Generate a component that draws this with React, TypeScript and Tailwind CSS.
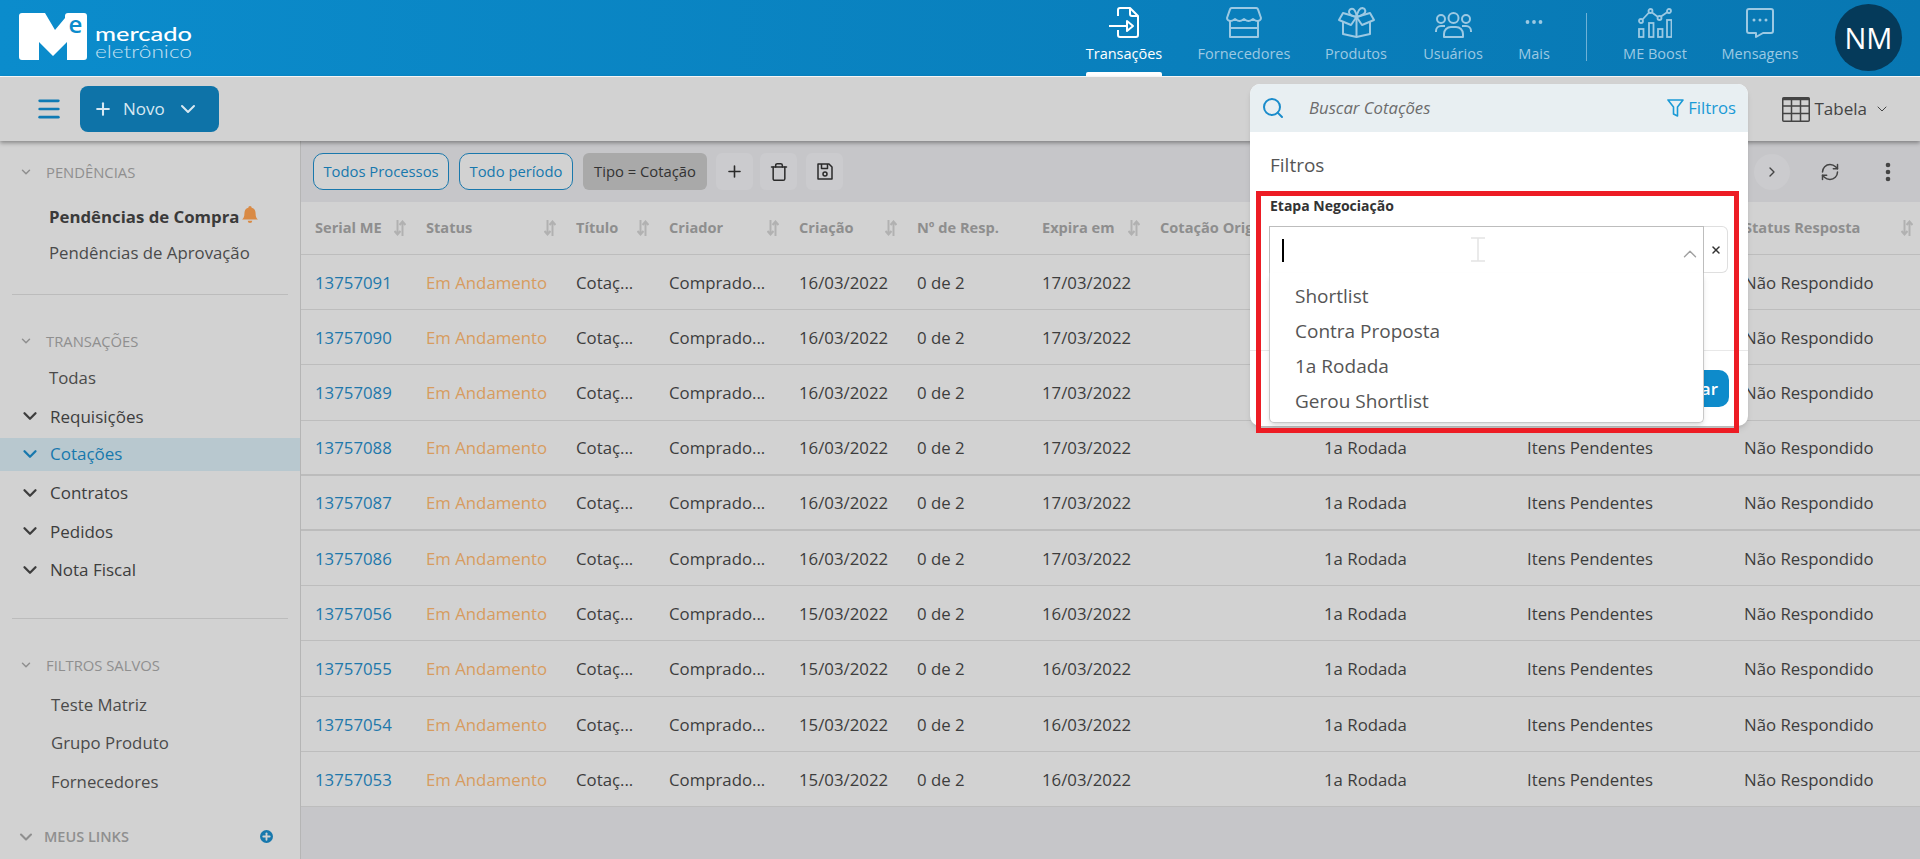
import React from "react";
import { ChevronDown, ChevronUp, ChevronRight, Menu, Plus, RefreshCw, Search, Trash, X } from "lucide-react";

const navItems = [
    { label: "Transações", width: "w-[120px]", active: true, icon: <FileIcon /> },
    { label: "Fornecedores", width: "w-[120px]", icon: <StoreIcon /> },
    { label: "Produtos", width: "w-[104px]", icon: <BoxIcon /> },
    { label: "Usuários", width: "w-[90px]", icon: <UsersIcon /> },
    { label: "Mais", width: "w-[72px]", icon: <DotsIcon /> },
];

const rows = [
    { serial: "13757091", created: "16/03/2022", expires: "17/03/2022", covered: true },
    { serial: "13757090", created: "16/03/2022", expires: "17/03/2022", covered: true },
    { serial: "13757089", created: "16/03/2022", expires: "17/03/2022", covered: true },
    { serial: "13757088", created: "16/03/2022", expires: "17/03/2022", thick: true },
    { serial: "13757087", created: "16/03/2022", expires: "17/03/2022", thick: true },
    { serial: "13757086", created: "16/03/2022", expires: "17/03/2022" },
    { serial: "13757056", created: "15/03/2022", expires: "16/03/2022" },
    { serial: "13757055", created: "15/03/2022", expires: "16/03/2022" },
    { serial: "13757054", created: "15/03/2022", expires: "16/03/2022" },
    { serial: "13757053", created: "15/03/2022", expires: "16/03/2022" },
];

const gridCols = "grid grid-cols-[111px_150px_93px_130px_118px_125px_118px_164px_203px_217px_1fr] pl-[14px]";

function FileIcon() {
    return (
        <svg width="36" height="31" viewBox="0 0 36 31" fill="none" stroke="currentColor" strokeWidth="2" strokeLinejoin="round">
            <path d="M12 9V3a2 2 0 0 1 2-2h10l8 8v19a2 2 0 0 1-2 2H14a2 2 0 0 1-2-2v-5" />
            <path d="M24 1v6a2 2 0 0 0 2 2h6" />
            <path d="M3 19h18" />
            <path d="M21 14l6 5-6 5z" />
        </svg>
    );
}

function StoreIcon() {
    return (
        <svg width="36" height="31" viewBox="0 0 36 31" fill="none" stroke="currentColor" strokeWidth="2" strokeLinejoin="round">
            <path d="M6 1h24a2 2 0 0 1 2 1.4L35 11c0 2-2 3-3.5 3s-3-1-4.500-2c-1.500 1-3 2-4.500 2s-3-1-4.500-2c-1.500 1-3 2-4.500 2s-3-1-4.500-2C7.500 13 6 14 4.500 14S1 13 1 11L4 2.400A2 2 0 0 1 6 1z" />
            <path d="M4 14v16h28V14" />
            <path d="M4 21h28" />
        </svg>
    );
}

function BoxIcon() {
    return (
        <svg width="37" height="31" viewBox="0 0 37 31" fill="none" stroke="currentColor" strokeWidth="2" strokeLinejoin="round">
            <path d="M5 15v12l13.500 3L32 27V15" />
            <path d="M18.500 10v20" />
            <path d="M18.500 10L5 6l-4 7 12 5z" />
            <path d="M18.500 10L32 6l4 7-12 5z" />
            <path d="M18.500 10C11 9 9 4 13 2c3-1 5.500 3 5.500 8z" />
            <path d="M18.500 10c1-5 3-9 6-9 3 .500 4 4 1 6-2 1.500-4 2.500-7 3z" />
        </svg>
    );
}

function UsersIcon() {
    return (
        <svg width="37" height="26" viewBox="0 0 37 26" fill="none" stroke="currentColor" strokeWidth="2" strokeLinejoin="round">
            <circle cx="18.500" cy="6" r="5" />
            <circle cx="6" cy="7" r="4" />
            <circle cx="31" cy="7" r="4" />
            <path d="M9 25v-3a7 7 0 0 1 7-7h5a7 7 0 0 1 7 7v3z" />
            <path d="M1 20v-1a5 5 0 0 1 5-5h4" />
            <path d="M36 20v-1a5 5 0 0 0-5-5h-4" />
        </svg>
    );
}

function DotsIcon() {
    return (
        <svg width="18" height="18" viewBox="0 0 18 18" fill="currentColor" className="mb-[7px]">
            <circle cx="2.500" cy="9" r="1.900" />
            <circle cx="9" cy="9" r="1.900" />
            <circle cx="15.500" cy="9" r="1.900" />
        </svg>
    );
}

function BoostIcon() {
    return (
        <svg width="34" height="30" viewBox="0 0 34 30" fill="none" stroke="currentColor" strokeWidth="1.800">
            <rect x="1" y="21" width="4.500" height="8" />
            <rect x="11" y="15" width="4.500" height="14" />
            <rect x="20" y="21" width="4.500" height="8" />
            <rect x="29" y="12" width="4.500" height="17" />
            <circle cx="3" cy="13" r="2" />
            <circle cx="12.500" cy="3" r="2" />
            <circle cx="21.500" cy="10" r="2" />
            <circle cx="31" cy="3" r="2" />
            <path d="M4.500 11.500l6.500-7M14 4.500l6 4.500M23 8.500l6.500-4.500" />
        </svg>
    );
}

function ChatIcon() {
    return (
        <svg width="28" height="30" viewBox="0 0 28 30" fill="none" stroke="currentColor" strokeWidth="2" strokeLinejoin="round">
            <path d="M3 1h22a2 2 0 0 1 2 2v20a2 2 0 0 1-2 2h-8l-7 4v-4H3a2 2 0 0 1-2-2V3a2 2 0 0 1 2-2z" />
            <circle cx="8" cy="12" r="1.500" fill="currentColor" stroke="none" />
            <circle cx="14" cy="12" r="1.500" fill="currentColor" stroke="none" />
            <circle cx="20" cy="12" r="1.500" fill="currentColor" stroke="none" />
        </svg>
    );
}

function Logo() {
    return (
        <svg width="175" height="50" viewBox="0 0 175 50" className="overflow-visible">
            <path
                d="M3 0h23l10 17 10-12V3a3 3 0 0 1 3-3h16a3 3 0 0 1 3 3v41a3 3 0 0 1-3 3H48V29l-14 14-14-14v18H3a3 3 0 0 1-3-3V3a3 3 0 0 1 3-3z"
                fill="#fff"
            />
            <text x="49.500" y="19.500" fontSize="24" fontWeight="600" fill="#0b8ccc" fontFamily="'Open Sans', sans-serif">e</text>
            <text x="76" y="28" fontSize="19" fontWeight="500" fill="#fff" fontFamily="Lato, sans-serif" textLength="97" lengthAdjust="spacingAndGlyphs">mercado</text>
            <text x="76" y="45" fontSize="18" fontWeight="300" fill="#fff" fillOpacity="0.75" fontFamily="Lato, sans-serif" textLength="97" lengthAdjust="spacingAndGlyphs">eletrônico</text>
        </svg>
    );
}

function SortIcon() {
    return (
        <svg width="12" height="16" viewBox="0 0 12 16" fill="none" stroke="#b1b1b1" strokeWidth="2" className="shrink-0">
            <path d="M3.500 0v14M.5 11l3 3.500 3-3.500" />
            <path d="M8.500 16V2M5.500 5l3-3.500 3 3.500" />
        </svg>
    );
}

function TableIcon() {
    return (
        <svg width="28" height="25" viewBox="0 0 28 25" fill="none" stroke="#444" strokeWidth="1.500">
            <rect x=".75" y=".75" width="26.500" height="23.500" rx="1" />
            <path d="M.75 2h26.500" strokeWidth="2.500" />
            <path d="M.75 9h26.500M.75 16.500h26.500M9.500 1v23M18.500 1v23" />
        </svg>
    );
}

function SaveIcon() {
    return (
        <svg width="16" height="17" viewBox="0 0 16 17" fill="none" stroke="#2b2b2b" strokeWidth="1.500" strokeLinejoin="round">
            <path d="M1 1h11l3 3v12H1z" />
            <path d="M4.500 1v4.500h6V1" />
            <circle cx="8" cy="11" r="2" />
        </svg>
    );
}

function FunnelIcon() {
    return (
        <svg width="17" height="18" viewBox="0 0 17 18" fill="none" stroke="#1a9ad6" strokeWidth="1.600" strokeLinejoin="round">
            <path d="M1 1h15l-5.500 7v9l-4-2V8z" />
        </svg>
    );
}

function SectionTitle({ label, big }: { label: string; big?: boolean }) {
    return (
        <div className={big ? "flex items-center h-6 pl-[16px] text-[#8f8f8f] font-semibold" : "flex items-center h-6 pl-[19px] text-[#8f8f8f]"}>
            <ChevronDown className={big ? "size-[20px] mr-[8px]" : "size-[14px] mr-[13px]"} strokeWidth={2.500} />
            <span className={big ? "text-[14.500px]" : "text-[14.800px]"}>{label}</span>
            {big && (
                <span className="ml-auto mr-[27px] flex size-[13px] items-center justify-center rounded-full bg-[#1778ad]">
                    <Plus className="size-[11px] text-[#d2d2d2]" strokeWidth={4} />
                </span>
            )}
        </div>
    );
}

function SideGroup({ label, active }: { label: string; active?: boolean }) {
    return (
        <div className={active ? "my-[2px] mb-[3px] flex h-[33px] items-center pl-[19px] bg-[#b8c8cf] text-[#1778ad] font-medium" : "flex h-[38.500px] items-center pl-[19px] text-[#3d3d3d] font-medium"}>
            <ChevronDown className="size-[22px] mr-[9px]" strokeWidth={2.500} />
            <span className="text-[17px]">{label}</span>
        </div>
    );
}

function Sidebar() {
    return (
        <aside className="w-[301px] shrink-0 border-r border-[#b5b5b5] bg-[#d2d2d2] text-[16.800px]">
            <div className="mt-[19px]">
                <SectionTitle label="PENDÊNCIAS" />
            </div>
            <div className="mt-[15px] pl-[49px]">
                <div className="flex h-9 items-center font-bold text-[#3a3a3a]">
                    Pendências de Compra
                    <svg width="16" height="18" viewBox="0 0 14 16" fill="#d98a45" className="ml-[3px] mb-[5px]">
                        <path d="M7 0a1.500 1.500 0 0 1 1.500 1.500C11 2.200 12 4 12 7c0 2.500.7 3.700 2 5H0c1.300-1.300 2-2.500 2-5 0-3 1-4.800 3.500-5.500A1.500 1.500 0 0 1 7 0zM5 13h4a2 2 0 0 1-4 0z" />
                    </svg>
                </div>
                <div className="flex h-9 items-center text-[#4a4a4a]">Pendências de Aprovação</div>
            </div>
            <div className="mx-3 mt-[23px] h-px bg-[#bcbcbc]" />
            <div className="mt-[34px]">
                <SectionTitle label="TRANSAÇÕES" />
            </div>
            <div className="mt-[6px] flex h-[38px] items-center pl-[49px] text-[#4a4a4a]">Todas</div>
            <SideGroup label="Requisições" />
            <SideGroup label="Cotações" active />
            <SideGroup label="Contratos" />
            <SideGroup label="Pedidos" />
            <SideGroup label="Nota Fiscal" />
            <div className="mx-3 mt-[29px] h-px bg-[#bcbcbc]" />
            <div className="mt-[34px]">
                <SectionTitle label="FILTROS SALVOS" />
            </div>
            <div className="mt-[8px] pl-[51px] text-[#4a4a4a]">
                <div className="flex h-[38.500px] items-center">Teste Matriz</div>
                <div className="flex h-[38.500px] items-center">Grupo Produto</div>
                <div className="flex h-[38.500px] items-center">Fornecedores</div>
            </div>
            <div className="mt-[24px]">
                <SectionTitle label="MEUS LINKS" big />
            </div>
        </aside>
    );
}

function HeadCell({ label, sort = true, last }: { label?: string; sort?: boolean; last?: boolean }) {
    return (
        <div className={last ? "flex items-center justify-between pr-[7px]" : "flex items-center justify-between pr-[20px]"}>
            <span className="whitespace-nowrap">{label}</span>
            {sort && <SortIcon />}
        </div>
    );
}

function DataTable() {
    return (
        <div className="bg-[#d2d2d2]">
            <div className={`${gridCols} h-[53px] items-center border-b border-[#bdbdbd] text-[14.600px] font-bold text-[#8e8e8e]`}>
                <HeadCell label="Serial ME" />
                <HeadCell label="Status" />
                <HeadCell label="Título" />
                <HeadCell label="Criador" />
                <HeadCell label="Criação" />
                <HeadCell label="Nº de Resp." sort={false} />
                <HeadCell label="Expira em" />
                <HeadCell label="Cotação Original" sort={false} />
                <HeadCell sort={false} />
                <HeadCell sort={false} />
                <HeadCell label="Status Resposta" last />
            </div>
            {rows.map((row) => (
                <div
                    key={row.serial}
                    className={`${gridCols} h-[55.200px] items-center pt-[1px] text-[16.800px] text-[#3d3d3d] ${row.thick ? "border-b-2 border-[#bcbcbc]" : "border-b border-[#bdbdbd]"}`}
                >
                    <span className="text-[#1e78ab]">{row.serial}</span>
                    <span className="text-[#d79c5f]">Em Andamento</span>
                    <span>Cotaç...</span>
                    <span>Comprado...</span>
                    <span>{row.created}</span>
                    <span>0 de 2</span>
                    <span>{row.expires}</span>
                    <span />
                    <span>{!row.covered && "1a Rodada"}</span>
                    <span>{!row.covered && "Itens Pendentes"}</span>
                    <span>Não Respondido</span>
                </div>
            ))}
        </div>
    );
}

function FilterPopup() {
    return (
        <div className="absolute left-[1250px] top-[84px] z-20 h-[342px] w-[498px] rounded-[10px] bg-white shadow-md">
            <div className="flex h-12 items-center rounded-t-[10px] bg-[#e8eff2] pl-[11px] pr-[12px]">
                <Search className="size-[24px] text-[#1a8ccb]" strokeWidth={2} />
                <span className="ml-[24px] text-[16.700px] italic text-[#6c6c6c]">Buscar Cotações</span>
                <span className="ml-auto flex items-center gap-[4px] text-[16.700px] text-[#1a9ad6]">
                    <FunnelIcon />
                    Filtros
                </span>
            </div>
            <div className="pl-[20px] pt-[20px] text-[19px] leading-[26px] text-[#555]">Filtros</div>
            <div className="mt-[19px] pl-[20px] text-[14px] font-bold leading-[18px] text-[#333]">Etapa Negociação</div>
            <div className="relative z-10 ml-[19px] mt-[11px] flex h-[47px] w-[459px]">
                <div className="flex h-[47px] w-[435px] items-center border-l border-t border-r border-[#bdbdbd] pl-[12px]">
                    <span className="h-[23px] w-[2px] bg-black" />
                    <svg width="14" height="25" viewBox="0 0 14 25" fill="none" stroke="#e4e4e4" strokeWidth="1.500" className="ml-[187px] mb-[2px]">
                        <path d="M0 1h14M0 24h14M7 1v23" />
                    </svg>
                    <ChevronUp className="ml-auto mr-[2px] mt-[8px] size-[22px] text-[#a0a0a0]" strokeWidth={1.500} />
                </div>
                <div className="flex w-[24px] items-center justify-center rounded-r-[6px] border-b border-r border-t border-[#dfdfdf]">
                    <X className="size-[12px] text-[#333]" strokeWidth={3} />
                </div>
                <div className="absolute left-0 top-[47px] h-[150px] w-[435px] rounded-b-[5px] border border-t-0 border-[#c8c8c8] bg-white py-[6px] pl-[25px] text-[19px] text-[#555] shadow-md">
                    <div className="h-[35px] leading-[35px]">Shortlist</div>
                    <div className="h-[35px] leading-[35px]">Contra Proposta</div>
                    <div className="h-[35px] leading-[35px]">1a Rodada</div>
                    <div className="h-[35px] leading-[35px]">Gerou Shortlist</div>
                </div>
            </div>
            <div className="mt-[77px] h-px bg-[#e8e8e8]" />
            <div className="mt-[19px] flex justify-end pr-[19px]">
                <div className="flex h-[37px] w-[90px] items-center justify-end rounded-[10px] bg-[#0e8bcb] pr-[11px] text-[17px] font-semibold text-white">Aplicar</div>
            </div>
            <div className="absolute left-[6px] top-[107px] z-20 h-[242px] w-[483px] border-[5px] border-[#ed1c24]" />
        </div>
    );
}

export default function App() {
    return (
        <div className="relative flex h-[859px] w-[1920px] flex-col overflow-hidden bg-[#c6c6c9] font-['Open_Sans',sans-serif]">
            {/* Top bar */}
            <header className="flex h-[77px] shrink-0 border-b border-white bg-gradient-to-r from-[#0b8ccc] to-[#0877b2] pl-[19px] pr-[18px]">
                <div className="pt-[13px]">
                    <Logo />
                </div>
                <nav className="ml-auto flex">
                    {navItems.map((item) => (
                        <div key={item.label} className={`flex flex-col items-center ${item.width} ${item.active ? "text-white" : "text-[#9cc9e3]"}`}>
                            <div className="mt-[7px] flex h-[31px] items-end justify-center">{item.icon}</div>
                            <div className="mt-[6px] text-[14.500px] font-medium leading-5">{item.label}</div>
                            {item.active && <div className="mt-auto h-1 w-[76px] rounded-t-[2px] bg-white" />}
                        </div>
                    ))}
                    <div className="mx-[16px] mt-[13px] h-[48px] w-px bg-[#6fb1d6]" />
                    <div className="flex w-[104px] flex-col items-center text-[#9cc9e3]">
                        <div className="mt-[7px] flex h-[31px] items-end justify-center"><BoostIcon /></div>
                        <div className="mt-[6px] text-[14.500px] font-medium leading-5">ME Boost</div>
                    </div>
                    <div className="flex w-[106px] flex-col items-center text-[#9cc9e3]">
                        <div className="mt-[7px] flex h-[31px] items-end justify-center"><ChatIcon /></div>
                        <div className="mt-[6px] text-[14.500px] font-medium leading-5">Mensagens</div>
                    </div>
                    <div className="ml-[22px] mt-[4px] flex size-[67px] items-center justify-center rounded-full bg-[#053a5a] text-[29px] text-white">NM</div>
                </nav>
            </header>

            {/* Toolbar */}
            <div className="relative z-10 flex h-[64px] shrink-0 items-center bg-[#d2d2d2] pl-[35px] pr-[30px] shadow-[0_2px_4px_rgba(0,0,0,0.35)]">
                <Menu className="size-[28px] text-[#0e7ab4]" strokeWidth={2.300} />
                <button className="ml-[17px] flex h-[46px] w-[139px] items-center rounded-[8px] bg-[#0e73a8] pl-[13px] text-[17px] text-[#d7e8f2]">
                    <Plus className="size-[20px]" strokeWidth={2.500} />
                    <span className="ml-[10px]">Novo</span>
                    <ChevronDown className="ml-[11px] size-[24px]" strokeWidth={2} />
                </button>
                <div className="ml-auto flex items-center text-[17px] text-[#444]">
                    <TableIcon />
                    <span className="ml-[5px]">Tabela</span>
                    <ChevronDown className="ml-[7px] size-[16px]" strokeWidth={1.500} />
                </div>
            </div>

            <div className="flex min-h-0 flex-1">
                <Sidebar />
                <main className="flex-1">
                    {/* Filter chips */}
                    <div className="flex h-[61px] items-center pl-[12px] pr-[29px] text-[14.800px]">
                        <span className="flex h-[37px] w-[136px] items-center justify-center rounded-[10px] border border-[#1a78ac] bg-[#d2d2d2] text-[#1778ad]">Todos Processos</span>
                        <span className="ml-[10px] flex h-[37px] w-[114px] items-center justify-center rounded-[10px] border border-[#1a78ac] bg-[#d2d2d2] text-[#1778ad]">Todo período</span>
                        <span className="ml-[10px] flex h-[37px] w-[124px] items-center justify-center rounded-[6px] bg-[#a9a9a9] text-[#333]">Tipo = Cotação</span>
                        <span className="ml-[9px] flex size-[37px] items-center justify-center rounded-[6px] bg-[#cbcbce]">
                            <Plus className="size-[19px] text-[#2b2b2b]" strokeWidth={2} />
                        </span>
                        <span className="ml-[7px] flex size-[37px] items-center justify-center rounded-[6px] bg-[#cbcbce]">
                            <Trash className="size-[20px] text-[#2b2b2b]" strokeWidth={1.800} />
                        </span>
                        <span className="ml-[9px] flex size-[37px] items-center justify-center rounded-[6px] bg-[#cbcbce]">
                            <SaveIcon />
                        </span>
                        <span className="ml-auto flex size-[36px] items-center justify-center rounded-full bg-[#cbcbce]">
                            <ChevronRight className="size-[16px] text-[#444]" strokeWidth={2} />
                        </span>
                        <RefreshCw className="ml-[30px] size-[20px] text-[#444]" strokeWidth={1.800} />
                        <svg width="6" height="20" viewBox="0 0 6 20" fill="#444" className="ml-[45px]">
                            <circle cx="3" cy="3" r="2.300" />
                            <circle cx="3" cy="10" r="2.300" />
                            <circle cx="3" cy="17" r="2.300" />
                        </svg>
                    </div>
                    <DataTable />
                </main>
            </div>

            <FilterPopup />
        </div>
    );
}
